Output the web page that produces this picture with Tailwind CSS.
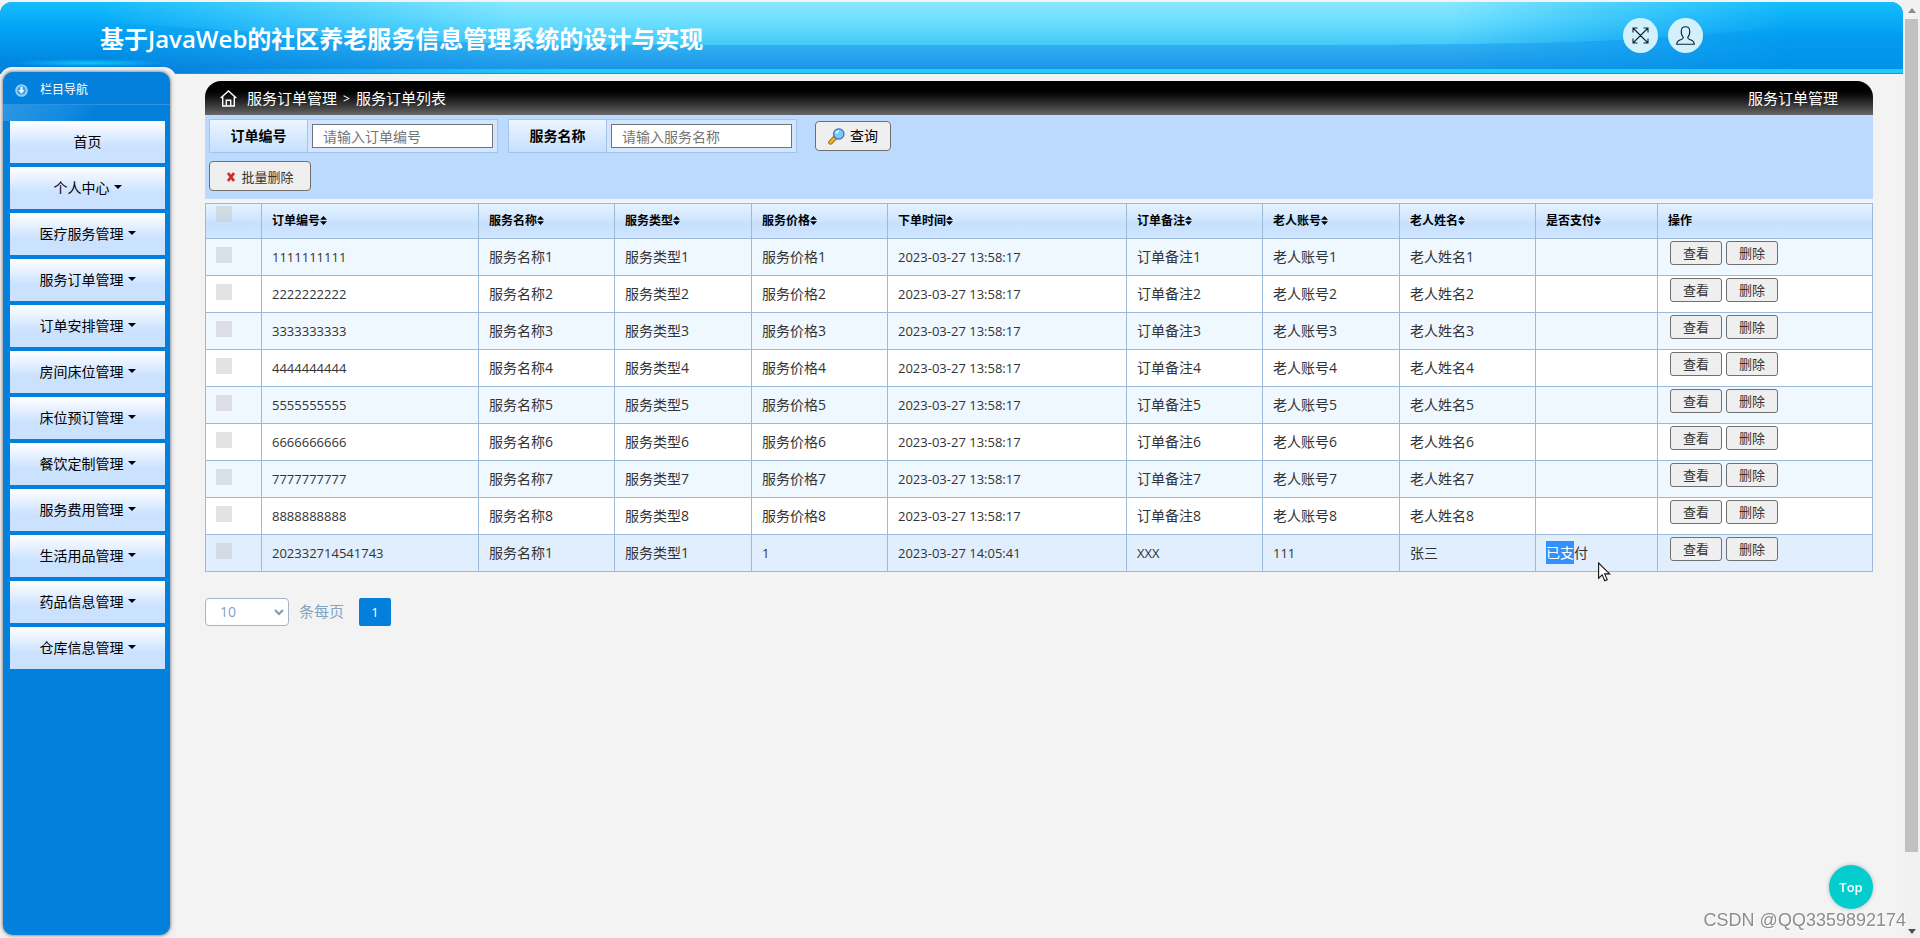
<!DOCTYPE html>
<html lang="zh-CN">
<head>
<meta charset="utf-8">
<title>服务订单列表</title>
<meta name="viewport" content="width=device-width, initial-scale=1">
<script src="https://cdn.jsdelivr.net/npm/@tailwindcss/browser@4"></script>
</head>
<body class="flex min-h-screen bg-[#f3f3f3] font-['Open_Sans','Noto_Sans_CJK_SC',sans-serif] text-sm text-black">

<div class="flex min-w-0 flex-1 flex-col pt-[2px]">
  <!-- Banner -->
  <header class="relative flex h-[72px] shrink-0 items-start justify-between overflow-hidden rounded-t-xl bg-[#0090ea] pl-[100px] pr-[200px]">
    <svg class="absolute inset-0 h-full w-full" viewBox="0 0 1903 72" preserveAspectRatio="none" aria-hidden="true">
      <defs>
        <linearGradient id="base" x1="0" y1="0" x2="0" y2="1"><stop offset="0" stop-color="#14bdfd"/><stop offset=".4" stop-color="#02a2f4"/><stop offset="1" stop-color="#007cda"/></linearGradient>
        <linearGradient id="baseR" x1="0" y1="0" x2="0" y2="1"><stop offset="0" stop-color="#14befe"/><stop offset=".5" stop-color="#029cf0"/><stop offset="1" stop-color="#0290ea"/></linearGradient>
        <linearGradient id="sky" x1="0" y1="0" x2="0" y2="44" gradientUnits="userSpaceOnUse"><stop offset="0" stop-color="#8ae7ff"/><stop offset=".45" stop-color="#6cdffe"/><stop offset="1" stop-color="#42c8f8"/></linearGradient>
        <linearGradient id="deep" x1="0" y1="42" x2="0" y2="66" gradientUnits="userSpaceOnUse"><stop offset="0" stop-color="#32b0f2"/><stop offset="1" stop-color="#1c97e8"/></linearGradient>
        <linearGradient id="fade"><stop offset=".05" stop-color="#000"/><stop offset=".15" stop-color="#777"/><stop offset=".27" stop-color="#fff"/><stop offset=".76" stop-color="#fff"/><stop offset=".85" stop-color="#777"/><stop offset=".94" stop-color="#000"/></linearGradient>
        <linearGradient id="line"><stop offset=".1" stop-color="#1fc8f8" stop-opacity="0"/><stop offset=".3" stop-color="#22ccfa"/><stop offset="1" stop-color="#22ccfa"/></linearGradient>
        <radialGradient id="glow"><stop offset="0" stop-color="#10c4fa"/><stop offset="1" stop-color="#10c4fa" stop-opacity="0"/></radialGradient>
        <mask id="m"><rect width="1903" height="72" fill="url(#fade)"/></mask>
      </defs>
      <rect width="952" height="72" fill="url(#base)"/>
      <rect x="951" width="952" height="72" fill="url(#baseR)"/>
      <g mask="url(#m)">
        <rect width="1903" height="72" fill="url(#deep)"/>
        <path d="M0 0H1903V4C1790 30 1640 39 1530 41C1480 42 1400 43 1300 43H600C450 42 260 34 0 10Z" fill="url(#sky)"/>
      </g>
      <ellipse cx="90" cy="61" rx="80" ry="4" fill="url(#glow)"/>
      <rect y="67" width="1903" height="4" fill="url(#line)"/>
      <rect x="174" y="71" width="1729" height="1" fill="#2492c4"/>
    </svg>
    <h1 class="relative mt-[19px] text-2xl font-bold leading-9 text-white">基于<span class="font-semibold">JavaWeb</span>的社区养老服务信息管理系统的设计与实现</h1>
    <div class="relative mt-4 flex gap-[10px]">
      <button type="button" aria-label="全屏" class="grid size-[35px] place-items-center rounded-full bg-[#d3f1fc]">
        <svg class="size-[17px]" viewBox="0 0 17 17" fill="none" stroke="#123" stroke-width="1.1"><path d="M1 1 16 16M16 1 1 16M1 5.500V1H5.500M11.500 1H16V5.500M16 11.500V16H11.500M5.500 16H1V11.500"/></svg>
      </button>
      <button type="button" aria-label="用户" class="grid size-[35px] place-items-center rounded-full bg-[#d3f1fc]">
        <svg class="size-[19px]" viewBox="0 0 19 19" fill="none" stroke="#123" stroke-width="1.1"><path d="M7.300 11.300C5.500 9.500 5 7.500 5.300 4.600C5.500 2.300 7 .8 9.500 .8S13.500 2.300 13.700 4.600C14 7.500 13.500 9.500 11.700 11.300C11.500 13 12.500 13 14.500 13.700C17 14.600 18.200 15.500 18.300 18.200H.7C.8 15.500 2 14.600 4.500 13.700C6.500 13 7.500 13 7.300 11.300Z"/></svg>
      </button>
    </div>
  </header>

  <div class="flex flex-1">
    <!-- Side navigation -->
    <aside class="relative -mt-[7px] flex w-[176px] shrink-0 flex-col rounded-t-xl bg-[#f0f0f1] pb-[3px] pl-[3px] pr-[6px] pt-[5px]">
      <nav class="flex-1 rounded-[10px] bg-[#0280dc] shadow-[0_0_3px_1px_#909396]" aria-label="栏目导航">
        <div class="flex h-[33px] items-center gap-3 border-b border-[#2b93e2] pl-3 pt-1 text-xs text-white">
          <svg class="size-[13px]" viewBox="0 0 13 13" aria-hidden="true"><circle cx="6.500" cy="6.500" r="6.300" fill="#8fd0f6"/><circle cx="6.500" cy="6.500" r="4.300" fill="#3aa0e6"/><path d="M5.500 3h2v3h2L6.500 9.800 3.500 6h2z" fill="#fff"/></svg>
          <span>栏目导航</span>
        </div>
        <div class="h-4 bg-[linear-gradient(125deg,#2c97e4_0%,#1289df_40%,#0280dc_55%)]"></div>
        <ul id="menu" class="flex flex-col gap-1 pl-[7px] pr-[5px]"></ul>
      </nav>
    </aside>

    <!-- Order list -->
    <main class="min-w-0 flex-1 pb-10 pl-[29px] pr-[30px] pt-[7px]">
      <div class="flex h-[34px] items-center justify-between rounded-t-2xl bg-linear-to-b from-black from-15% to-[#686868] pl-[15px] pr-[35px] pt-[2px] text-[15px] text-white">
        <div class="flex items-center">
          <svg class="mr-[10px] size-[17px]" viewBox="0 0 17 17" fill="none" stroke="#fff" stroke-width="1.400" aria-hidden="true"><path d="M.7 8 8.500 1 16.300 8M2.700 6.500V16H14.300V6.500M6.300 16V10.200H10.700V16"/></svg>
          <a href="#">服务订单管理</a><span class="mx-[6px] text-xs">&gt;</span><span>服务订单列表</span>
        </div>
        <span>服务订单管理</span>
      </div>

      <form class="flex h-[84px] flex-col gap-2 bg-[#bbdafe] px-1 pt-1" onsubmit="return false">
        <div class="flex items-center">
          <div class="mr-[10px] flex h-[34px] items-center border border-[#a4c3e8] bg-[#d3e6fe]">
            <label for="orderNo" class="grid h-full w-[98px] place-items-center border-r border-[#a4c3e8] bg-linear-to-b from-[#ecf6ff] to-[#c5dffd] font-bold">订单编号</label>
            <input id="orderNo" type="text" placeholder="请输入订单编号" class="mx-1 h-6 w-[181px] border border-[#70757c] bg-white px-[10px] placeholder:text-[#757575]">
          </div>
          <div class="mr-[18px] flex h-[34px] items-center border border-[#a4c3e8] bg-[#d3e6fe]">
            <label for="svcName" class="grid h-full w-[98px] place-items-center border-r border-[#a4c3e8] bg-linear-to-b from-[#ecf6ff] to-[#c5dffd] font-bold">服务名称</label>
            <input id="svcName" type="text" placeholder="请输入服务名称" class="mx-1 h-6 w-[181px] border border-[#70757c] bg-white px-[10px] placeholder:text-[#757575]">
          </div>
          <button type="submit" class="flex h-[30px] w-[76px] items-center justify-center gap-[5px] rounded border border-[#707070] bg-[#efefef]">
            <svg class="size-[17px]" viewBox="0 0 17 17" aria-hidden="true"><path d="M6.800 10 2.500 14.300" stroke="#9a6410" stroke-width="4.600" stroke-linecap="round"/><path d="M6.300 10.500 2.600 14.200" stroke="#f0b030" stroke-width="3" stroke-linecap="round"/><circle cx="10.800" cy="6" r="5.200" fill="#7cc8f8" stroke="#2c6fc0" stroke-width="1.200"/><path d="M7.300 6.200A3.700 3.700 0 0 1 11.500 2.300Q10.500 5 7.300 6.200Z" fill="#e4f6ff"/></svg>
            <span>查询</span>
          </button>
        </div>
        <button type="button" class="flex h-[30px] w-[102px] items-center justify-center gap-[5px] rounded border border-[#707070] bg-[#efefef] pt-[2px] text-[13px] text-[#333]">
          <svg class="size-[10px]" viewBox="0 0 10 10" aria-hidden="true"><path d="M2 1 8 9M8 1 2 9" stroke="#d02c2c" stroke-width="2.800"/></svg>
          <span>批量删除</span>
        </button>
      </form>

      <table class="mt-1 w-full table-fixed border-collapse border border-[#9db9d9] text-left">
        <colgroup>
          <col class="w-[56px]"><col class="w-[217px]"><col class="w-[136px]"><col class="w-[137px]"><col class="w-[136px]"><col class="w-[239px]"><col class="w-[136px]"><col class="w-[137px]"><col class="w-[136px]"><col class="w-[122px]"><col>
        </colgroup>
        <thead class="bg-[linear-gradient(#e6f3ff_0%,#cfe5ff_45%,#c6e0fe_55%,#d2e6ff_100%)] text-xs">
          <tr id="heads" class="h-[35px]"></tr>
        </thead>
        <tbody id="rows" class="text-[#333]"></tbody>
      </table>

      <div class="mt-[26px] flex items-center text-[15px] text-[#84a2c4]">
        <div class="relative">
          <select id="size" class="h-7 w-[84px] appearance-none rounded border border-[#a9b4c6] bg-white pl-[14px] text-sm"><option>10</option><option>20</option></select>
          <svg class="pointer-events-none absolute right-[5px] top-[11px] h-[7px] w-[10px]" viewBox="0 0 10 7" fill="none" stroke="#8698ae" stroke-width="2"><path d="M1 1 5 5 9 1"/></svg>
        </div>
        <label for="size" class="ml-[10px]">条每页</label>
        <button type="button" class="ml-[15px] h-7 w-8 rounded-xs bg-[#0480dc] text-[13px] text-white">1</button>
      </div>
    </main>
  </div>
</div>

<!-- Scroll bar -->
<div class="flex w-[17px] shrink-0 flex-col items-center bg-[#f1f1f1] pb-1 pt-2" aria-hidden="true">
  <svg class="h-[5px] w-[8px]" viewBox="0 0 8 5"><path d="M0 5 4 0 8 5Z" fill="#8b8b8b"/></svg>
  <div class="mb-[77px] mt-[6px] w-[13px] flex-1 bg-[#c1c1c1]"></div>
  <svg class="h-[5px] w-[8px]" viewBox="0 0 8 5"><path d="M0 0 4 5 8 0Z" fill="#505050"/></svg>
</div>

<a href="#" class="fixed bottom-[29px] right-[47px] grid size-[44px] place-items-center rounded-full bg-[#05cdcd] text-[13px] font-semibold text-white shadow-[0_0_4px_#b5b5b5]">Top</a>
<div class="fixed bottom-[6px] right-[14px] font-['Liberation_Sans',sans-serif] text-lg leading-6 text-[#8d8d8d] [text-shadow:1px_1px_0_#fff]">CSDN @QQ3359892174</div>
<svg class="fixed left-[1598px] top-[562px] h-[20px] w-[13px]" viewBox="0 0 13 20" aria-hidden="true"><path d="M.6 1V16.200L4.200 12.900 6.700 18.700 9.200 17.600 6.700 11.900H11.700Z" fill="#fff" stroke="#111" stroke-width="1.100"/></svg>

<script>
const menu = ['首页','个人中心','医疗服务管理','服务订单管理','订单安排管理','房间床位管理','床位预订管理','餐饮定制管理','服务费用管理','生活用品管理','药品信息管理','仓库信息管理'];
document.getElementById('menu').innerHTML = menu.map((t, i) =>
  `<li><a href="#" class="flex h-[42px] items-center justify-center gap-1 bg-linear-to-b from-white to-[#cbe2ff] to-60%">${t}${i ? '<span class="mb-[2px] border-x-4 border-t-4 border-x-transparent border-t-black"></span>' : ''}</a></li>`).join('');

const box = '<input type="checkbox" aria-label="选择" class="block size-4 appearance-none bg-[#c8c8c8]/50">';
const sort = '<svg class="inline h-[9px] w-[7px] align-baseline" viewBox="0 0 7 9" aria-hidden="true"><path d="M0 3.800 3.500 0 7 3.800ZM0 5.200 3.500 9 7 5.200Z"/></svg>';
const heads = ['订单编号','服务名称','服务类型','服务价格','下单时间','订单备注','老人账号','老人姓名','是否支付'];
document.getElementById('heads').innerHTML =
  `<th class="border-r border-[#9db9d9] pl-[10px] pt-[2px] align-top">${box}</th>` +
  heads.map(h => `<th class="border-r border-[#9db9d9] px-[10px]">${h}${sort}</th>`).join('') +
  '<th class="px-[10px]">操作</th>';

const data = [1,2,3,4,5,6,7,8].map(n => [String(n).repeat(10), '服务名称'+n, '服务类型'+n, '服务价格'+n, '2023-03-27 13:58:17', '订单备注'+n, '老人账号'+n, '老人姓名'+n, '']);
data.push(['202332714541743','服务名称1','服务类型1','1','2023-03-27 14:05:41','XXX','111','张三','<mark class="bg-[#3390ff] py-[2px] text-white">已支</mark>付']);
const btn = t => `<button type="button" class="h-6 w-[52px] rounded-[3px] border border-[#707070] bg-[#efefef] text-[13px] leading-5">${t}</button>`;
const stripe = i => i === data.length - 1 ? 'bg-[#e1eefe]' : i % 2 ? 'bg-white' : 'bg-[#eff7ff]';
document.getElementById('rows').innerHTML = data.map((r, i) =>
  `<tr class="h-[37px] border-t border-[#9db9d9] ${stripe(i)}">` +
  `<td class="border-r border-[#9db9d9] pl-[10px] pt-2 align-top">${box}</td>` +
  r.map(c => `<td class="border-r border-[#9db9d9] px-[10px] ${/^[\x20-\x7e]+$/.test(c) ? 'text-[13px]' : 'text-sm'}">${c}</td>`).join('') +
  `<td class="pl-3 pt-[2px] align-top"><div class="flex gap-1">${btn('查看')}${btn('删除')}</div></td></tr>`).join('');
</script>
</body>
</html>
